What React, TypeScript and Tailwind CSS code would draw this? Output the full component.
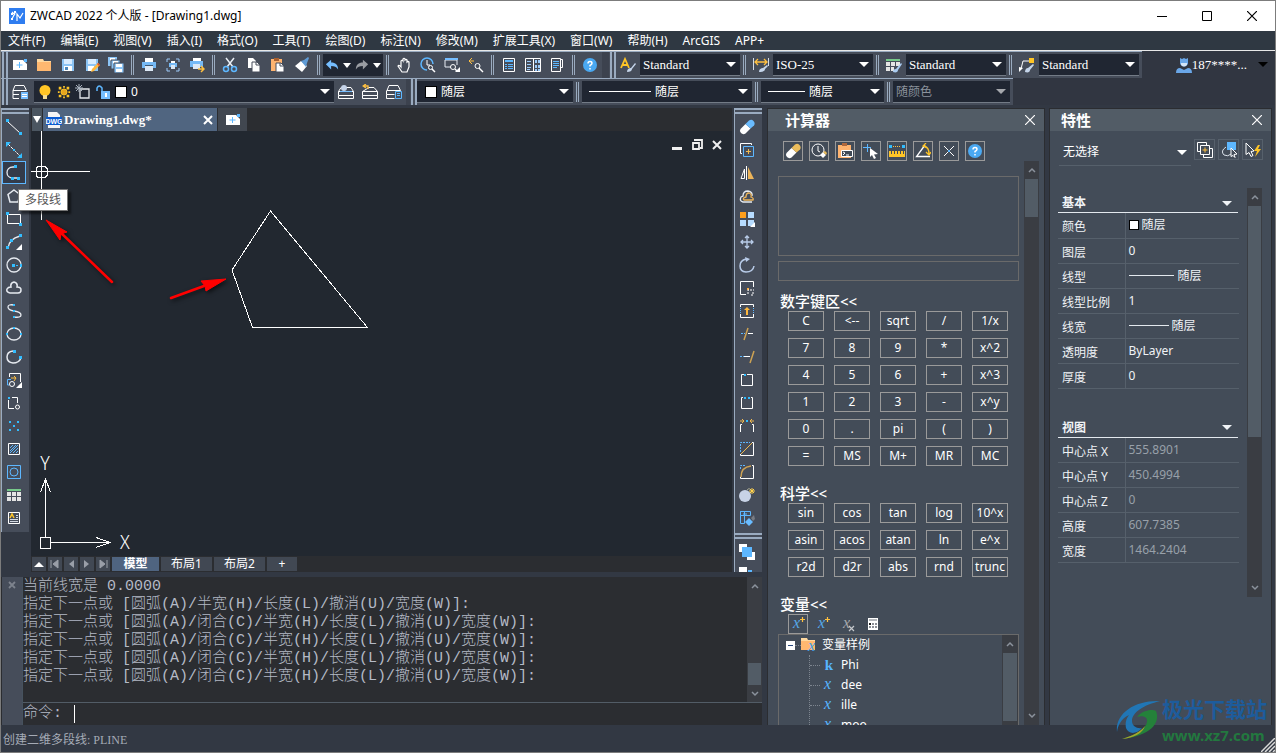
import React from "react";
import { useState } from "react";

type IconProps = { name: string; size?: string };

const menus = [
  "文件(F)",
  "编辑(E)",
  "视图(V)",
  "插入(I)",
  "格式(O)",
  "工具(T)",
  "绘图(D)",
  "标注(N)",
  "修改(M)",
  "扩展工具(X)",
  "窗口(W)",
  "帮助(H)",
  "ArcGIS",
  "APP+",
];

// every drawing below sits on a 16x16 grid
const icons: Record<string, React.ReactNode> = {
  new: (
    <>
      <path d="M1 3h10l4 4v6H1z" fill="#fff" />
      <path d="M12 2h3v3h-3z" fill="#5db7ff" />
      <path d="M7.500 5v6M4.500 8h6" stroke="#5db7ff" strokeWidth="1" />
    </>
  ),
  open: (
    <>
      <path d="M1 2h6l1 2h7v10H1z" fill="#ffd9a0" />
      <path d="M1 5h14v9H1z" fill="#ffb870" />
    </>
  ),
  save: (
    <>
      <path d="M2 2h12v12H2z" fill="#8cc4f5" />
      <path d="M4 2h8v5H4z" fill="#d8ecff" />
      <path d="M4 9h8v5H4z" fill="#fff" />
      <path d="M5 10h3v3H5z" fill="#4d88bb" />
    </>
  ),
  saveAs: (
    <>
      <path d="M2 2h12v12H2z" fill="#8cc4f5" />
      <path d="M4 2h8v5H4z" fill="#d8ecff" />
      <path d="M4 9h6v5H4z" fill="#fff" />
      <path d="M14 6l2 2-6 6-3 1 1-3z" fill="#ffb83d" />
      <path d="M14 6l2 2-1 1-2-2z" fill="#e04b2e" />
    </>
  ),
  saveAll: (
    <>
      <path d="M0 0h9v9H0z" fill="#8cc4f5" />
      <path d="M2 1h5v3H2z" fill="#fff" />
      <path d="M3 3h9v9H3z" fill="#8cc4f5" stroke="#464d5a" />
      <path d="M5 4h5v3H5z" fill="#fff" />
      <path d="M6 6h10v10H6z" fill="#8cc4f5" stroke="#464d5a" />
      <path d="M8 7h6v3H8zM8 12h6v3H8z" fill="#fff" />
    </>
  ),
  print: (
    <>
      <path d="M4 1h8v4H4z" fill="#fff" />
      <path d="M1 5h14v6H1z" fill="#75b9f5" />
      <path d="M4 8h8v6H4z" fill="#dce8f5" />
      <path d="M4 8h8v1H4z" fill="#3f5670" />
    </>
  ),
  preview: (
    <>
      <path d="M2 5V2h3M11 2h3v3M14 11v3h-3M5 14H2v-3" fill="none" stroke="#9ccbfa" />
      <path d="M6 4h4v2H6z" fill="#fff" />
      <path d="M4 6h8v4H4z" fill="#75b9f5" />
      <path d="M6 8h4v4H6z" fill="#dce8f5" />
    </>
  ),
  publish: (
    <>
      <path d="M4 1h8v4H4z" fill="#fff" />
      <path d="M1 4h13v6H1z" fill="#75b9f5" />
      <path d="M4 7h7v5H4z" fill="#dce8f5" />
      <path d="M9 12h5M12 9l3 3-3 3" fill="none" stroke="#ffc040" strokeWidth="1.500" />
    </>
  ),
  cut: (
    <>
      <path d="M4 1l7 9M12 1L5 10" stroke="#e8eef5" strokeWidth="1.500" />
      <circle cx="4" cy="12" r="2.500" fill="none" stroke="#5db7ff" strokeWidth="1.500" />
      <circle cx="12" cy="12" r="2.500" fill="none" stroke="#5db7ff" strokeWidth="1.500" />
    </>
  ),
  copy: (
    <>
      <path d="M2 1h5l3 3v7H2z" fill="#fff" />
      <path d="M6 5h5l3 3v7H6z" fill="#fff" stroke="#464d5a" />
      <path d="M10 5v3h4" fill="none" stroke="#464d5a" />
    </>
  ),
  paste: (
    <>
      <path d="M1 2h11v12H1z" fill="#ffb470" />
      <path d="M4 1h5v3H4z" fill="#a86030" />
      <path d="M6 6h5l3 3v6H6z" fill="#fff" stroke="#464d5a" />
      <path d="M10 6v3h4" fill="none" stroke="#464d5a" />
    </>
  ),
  brush: (
    <>
      <path d="M1 9l6-5 6 5-5 6z" fill="#fff" />
      <path d="M7 4l3-1 4-3 1 1-2 5-1 4z" fill="#5f9bd5" />
    </>
  ),
  undo: <path d="M7 2v3c5 0 8 3 8 8-2-3-4-4-8-4v4L1 7z" fill="#75bdff" />,
  redo: <path d="M9 2v3C4 5 1 8 1 13c2-3 4-4 8-4v4l6-6z" fill="#9a9da3" />,
  hand: (
    <path
      d="M5 9V4q1-1.500 2 0V2q1-1.500 2 0v1q1-1 2 0v2q1-1 2 0v5l-2 5H6L2 9q1-1.500 3 1z"
      fill="none"
      stroke="#fff"
      strokeWidth="1.200"
    />
  ),
  zoomTime: (
    <>
      <path d="M7 13A6 6 0 1 1 13 7" fill="none" stroke="#5db7ff" strokeWidth="1.500" />
      <path d="M7 3v5h3" fill="none" stroke="#fff" />
      <circle cx="10.500" cy="10.500" r="2" fill="none" stroke="#fff" />
      <path d="M12 12l3 3" stroke="#fff" strokeWidth="1.500" />
    </>
  ),
  zoomWindow: (
    <>
      <path d="M7 10H1V3h12v5" fill="none" stroke="#e8eef5" />
      <path d="M1 1h13v2H1z" fill="#75bdff" />
      <circle cx="9" cy="10" r="2.500" fill="none" stroke="#fff" />
      <path d="M11 12l2 2" stroke="#fff" strokeWidth="1.500" />
      <path d="M16 10v5h-5z" fill="#fff" />
    </>
  ),
  zoomBack: (
    <>
      <path d="M4 1L1 4l3 3M1 4h5" fill="none" stroke="#ffc040" />
      <circle cx="9.500" cy="9" r="2.500" fill="none" stroke="#fff" />
      <path d="M11 11l4 4" stroke="#fff" strokeWidth="1.500" />
    </>
  ),
  propsSheet: (
    <>
      <path d="M2.500 1.500h11v13h-11z" fill="none" stroke="#fff" />
      <path d="M4 3h8v2H4z" fill="#5db7ff" />
      <path d="M4 7h2v1H4zM7 7h5v1H7zM4 9h2v1H4zM7 9h5v1H7zM4 11h2v1H4zM7 11h5v1H7z" fill="#5db7ff" />
    </>
  ),
  designCenter: (
    <>
      <path d="M.5 1.500h15v13H.5zM8.500 1v14" fill="none" stroke="#fff" />
      <path d="M2 4.500h4M2 7.500h4M2 10.500h4M2 12.500h3" stroke="#9ccbfa" />
      <path d="M10 3h2v3h-2zM13 3h2v3h-2zM10 8h2v3h-2zM13 8h2v3h-2zM10 12h2v2h-2zM13 12h2v2h-2z" fill="#9ccbfa" />
    </>
  ),
  palettes: (
    <>
      <path d="M2.500 1.500h9v13h-9z" fill="none" stroke="#fff" />
      <path d="M4 4.500h6M4 6.500h6M4 8.500h6M4 10.500h4" stroke="#5db7ff" />
      <path d="M11.500 2.500h2v8h-2z" fill="none" stroke="#fff" />
    </>
  ),
  help: (
    <>
      <circle cx="8" cy="8" r="7" fill="#4aa9f2" />
      <path d="M6 6.500Q6 4.500 8 4.500t2 1.700Q10 7.500 8 8.500v1M8 11v1.500" fill="none" stroke="#fff" strokeWidth="1.500" />
    </>
  ),
  textStyle: (
    <>
      <path d="M1 11L5 2l4 9M3 8h5" fill="none" stroke="#ffc526" strokeWidth="1.800" />
      <path d="M7 15c0-3 2-4 4-4l4-5 1 1-4 5c0 2-2 3-5 3z" fill="#c5d5ea" />
    </>
  ),
  dimStyle: (
    <>
      <path d="M.5 1v12M15.500 1v8" stroke="#d5dce6" />
      <path d="M2 5h12M5 2L2 5l3 3M11 2l3 3-3 3" fill="none" stroke="#ffc040" strokeWidth="1.300" />
      <path d="M6 15c0-3 2-4 4-4l4-3 1 1-3 3c0 2-2 3-6 3z" fill="#c5d5ea" />
    </>
  ),
  tableStyle: (
    <>
      <path d="M0 2h14v2H0z" fill="#77c98a" />
      <path d="M0 5h4v4H0zM5 5h4v4H5zM10 5h4v4h-4zM0 10h4v4H0zM5 10h3v4H5z" fill="#e4e4e4" />
      <path d="M7 15c0-2 1-3 3-3l5-6 1 1-4 6c0 2-2 3-5 2z" fill="#a9cbf0" />
    </>
  ),
  leaderStyle: (
    <>
      <path d="M2 12l2-8h6" fill="none" stroke="#fff" />
      <path d="M0 10l4 1-4 4z" fill="#fff" />
      <path d="M10 1h5v5h-5z" fill="#ffc526" />
      <path d="M6 15c0-2 1-4 3-4l5-4 1 1-4 5c0 2-2 3-5 2z" fill="#c5d5ea" />
    </>
  ),
  user: (
    <>
      <path d="M4 1l2 1 2-1 2 1 2-1v6q-4 5-8 0zM0 16q0-5 4-5l4 2 4-2q4 0 4 5z" fill="#6aa7e8" />
      <path d="M5 6h6v2q-3 3-6 0z" fill="#d3e5f7" />
    </>
  ),
  layers: (
    <>
      <path d="M3 1.500h9l2.500 5H1zM1 6.500v4h6M1 10.500v4h6" fill="none" stroke="#fff" />
      <path d="M9 8h7v7H9z" fill="#75bdff" />
      <path d="M10 10.500h5M10 12.500h5" stroke="#fff" />
    </>
  ),
  layerDot: (
    <>
      <path d="M3 3.500h10l2.500 4H.5zM.5 7.500v4h15v-4M.5 11.500v3h15v-3" fill="none" stroke="#fff" />
      <circle cx="6" cy="4" r="3" fill="#c5d3e8" />
      <path d="M2 7.500h12" stroke="#75bdff" />
    </>
  ),
  layerPrev: (
    <>
      <path d="M7 3.500h5l3.500 4H.5zM.5 7.500v4h15v-4M.5 11.500v3h15v-3" fill="none" stroke="#fff" />
      <path d="M4 0L1 2l3 2M1 2h5v3" fill="none" stroke="#ffc040" strokeWidth="1.300" />
    </>
  ),
  layerState: (
    <>
      <path d="M3 1.500h9l2.500 5H1zM.5 6.500v4h8M.5 10.500v4h8" fill="none" stroke="#fff" />
      <path d="M9.500 7.500h6v7h-6zM11 9.500h3M11 11.500h3" fill="none" stroke="#5db7ff" />
    </>
  ),
  bulb: (
    <>
      <circle cx="8" cy="6.500" r="5.500" fill="#ffc526" />
      <path d="M6 11h4v4H6z" fill="#f3dc92" />
    </>
  ),
  sun: (
    <>
      <circle cx="8" cy="8" r="3.500" fill="#e6a51e" stroke="#ffc526" />
      <path d="M2 2h3v3H2zM7 1h2v2H7zM11 2h3v3h-3zM1 7h2v2H1zM13 7h2v2h-2zM2 11h3v3H2zM7 13h2v2H7zM11 11h3v3h-3z" fill="#ffc526" />
    </>
  ),
  freeze: (
    <>
      <path d="M5 5h9v9H5z" fill="none" stroke="#e4e7ec" strokeWidth="1.300" />
      <path d="M4 0v8M0 4h8M1 1l6 6M7 1L1 7" stroke="#aab3bf" />
    </>
  ),
  unlock: (
    <>
      <path d="M2 7V4q2-4 5 0v5" fill="none" stroke="#5db7ff" strokeWidth="1.500" />
      <path d="M6 7h9v8H6z" fill="#75bdff" />
      <path d="M10 9h2v4h-2z" fill="#fff" />
    </>
  ),
  line: (
    <>
      <path d="M2 3l12 11" stroke="#fff" />
      <path d="M0 0h3v3H0zM13 13h3v3h-3z" fill="#33bdff" />
    </>
  ),
  xline: (
    <>
      <path d="M2 2l12 12" stroke="#fff" strokeDasharray="3 1" />
      <path d="M0 0h5L0 5zM16 16h-5l5-5zM7 7h2v2H7z" fill="#33bdff" />
    </>
  ),
  pline: (
    <>
      <path d="M9 2H7C-1 2-1 13 7 13h5" fill="none" stroke="#e6eaf0" strokeWidth="1.300" />
      <path d="M8 0h3v3H8zM5 12h3v3H5zM11 12h3v3h-3z" fill="#33bdff" />
    </>
  ),
  polygon: <path d="M8 2l6 4.500-2 7.500H4L2 6.500z" fill="none" stroke="#e6eaf0" strokeWidth="1.500" />,
  rect: (
    <>
      <path d="M1.500 3.500h13v9h-13z" fill="none" stroke="#fff" />
      <path d="M0 1h3v3H0zM13 12h3v3h-3z" fill="#33bdff" />
    </>
  ),
  arc: (
    <>
      <path d="M2 14Q3 5 14 2" fill="none" stroke="#e6eaf0" strokeWidth="1.300" />
      <path d="M13 0h3v3h-3zM4 5h3v3H4zM0 12h3v3H0z" fill="#33bdff" />
      <path d="M16 10v6h-6z" fill="#fff" />
    </>
  ),
  circle: (
    <>
      <circle cx="8" cy="8" r="7" fill="none" stroke="#e6eaf0" strokeWidth="1.300" />
      <path d="M6 7h3v3H6zM10 8h2v1h-2zM14 7h2v3h-2z" fill="#33bdff" />
    </>
  ),
  cloud: (
    <path
      d="M4 13q-4-1-3-4 1-2 4-2-1-4 3-5 4 1 3 5 4 0 4 3t-3 3z"
      fill="none"
      stroke="#e6eaf0"
      strokeWidth="1.500"
    />
  ),
  spline: (
    <>
      <path d="M8 2Q2 1 2 4t6 4q7 1 7 4t-7 2" fill="none" stroke="#e6eaf0" strokeWidth="1.300" />
      <path d="M7 1h2v2H7zM7 7h2v2H7zM7 13h2v2H7z" fill="#33bdff" />
    </>
  ),
  ellipse: (
    <>
      <ellipse cx="8" cy="8" rx="7" ry="6" fill="none" stroke="#e6eaf0" strokeWidth="1.300" />
      <path d="M7 1h2v2H7zM0 7h2v2H0zM14 7h2v2h-2z" fill="#33bdff" />
    </>
  ),
  ellipseArc: (
    <>
      <path d="M7 2C-1 3-1 13 7 14q6 0 8-5" fill="none" stroke="#e6eaf0" strokeWidth="1.500" />
      <path d="M7 1h3v3H7zM13 7h3v3h-3z" fill="#33bdff" />
    </>
  ),
  insertBlock: (
    <>
      <path d="M3.500 5V1.500h11V10" fill="none" stroke="#fff" />
      <path d="M3 13H1.500V7.500H5" fill="none" stroke="#5db7ff" />
      <path d="M5 6h5M8 4l2 2-2 3" fill="none" stroke="#ffc040" />
      <circle cx="6" cy="12" r="2.500" fill="none" stroke="#fff" />
      <path d="M16 10v6h-6z" fill="#fff" />
    </>
  ),
  makeBlock: (
    <>
      <path d="M8 13.500H2.500V5M6 2.500h5.500V8" fill="none" stroke="#fff" />
      <path d="M2 2h2v2H2z" fill="#33bdff" />
      <circle cx="11.500" cy="12" r="2" fill="none" stroke="#fff" />
    </>
  ),
  points: (
    <path d="M3 3h2v2H3zM11 3h2v2h-2zM7 7h2v2H7zM3 11h2v2H3zM11 11h2v2h-2z" fill="#33bdff" />
  ),
  hatch: (
    <>
      <path d="M2.500 2.500h11v11h-11z" fill="none" stroke="#fff" />
      <path d="M4 7l3-3M4 10l6-6M4 12l8-8M7 12l5-5M10 12l2-2" stroke="#5db7ff" />
    </>
  ),
  region: (
    <>
      <path d="M1.500 1.500h13v13h-13z" fill="none" stroke="#5db7ff" />
      <circle cx="8" cy="8" r="4" fill="none" stroke="#5db7ff" />
    </>
  ),
  table: (
    <>
      <path d="M1 2h14v2H1z" fill="#77c98a" />
      <path d="M1 5h4v4H1zM6 5h4v4H6zM11 5h4v4h-4zM1 10h4v4H1zM6 10h4v4H6zM11 10h4v4h-4z" fill="#e4e4e4" />
    </>
  ),
  mtext: (
    <>
      <path d="M2.500 2.500h11v11h-11z" fill="none" stroke="#fff" />
      <path d="M10 5.500h2M10 7.500h2M4 9.500h8M4 11.500h8" fill="none" stroke="#d3d9e2" />
      <path d="M4 8l2-4 2 4" fill="none" stroke="#ffc526" strokeWidth="1.500" />
    </>
  ),
  erase: (
    <>
      <path d="M1.500 10L6.500 5l5 4.500-5 5q-2.500 1.500-4.500-.5t-.5-4z" fill="#fff" />
      <path d="M6.500 5l3.500-3.500q2.500-1.500 4.500.5t.5 4.500l-3.500 3z" fill="#6abcff" />
    </>
  ),
  eraseGold: (
    <>
      <path d="M1.500 10L6.500 5l5 4.500-5 5q-2.500 1.500-4.500-.5t-.5-4z" fill="#fff" />
      <path d="M6.500 5l3.500-3.500q2.500-1.500 4.500.5t.5 4.500l-3.500 3z" fill="#ecbd5c" />
    </>
  ),
  duplicate: (
    <>
      <path d="M3 11.500H1.500v-10H12.500V3" fill="none" stroke="#fff" />
      <path d="M4.500 4.500h10v10h-10z" fill="none" stroke="#5db7ff" />
      <path d="M7 9.500h5M9.500 7v5" stroke="#f0b950" />
    </>
  ),
  mirror: (
    <>
      <path d="M5.500 4v9.500H2z" fill="none" stroke="#fff" />
      <path d="M7.500 1v14" stroke="#fff" />
      <path d="M9 2v12h6z" fill="#ecb45a" />
    </>
  ),
  offset: (
    <>
      <path d="M13 14H4q-4-1-2-5l2-1q0-5 5-5 5 1 4 5" fill="none" stroke="#e6eaf0" strokeWidth="1.300" />
      <path d="M14 12H5q-2-2 2-3 0-4 3-4 3 1 2 4 3 1 2 3z" fill="none" stroke="#ecb45a" strokeWidth="1.300" />
    </>
  ),
  array: (
    <>
      <path d="M1 1h6v6H1z" fill="#ff9f1c" />
      <path d="M9 1h6v6H9zM1 9h6v6H1zM9 9h6v6H9z" fill="#b7dcff" />
      <path d="M16 11v5h-5z" fill="#fff" />
    </>
  ),
  move: (
    <path
      d="M8 2v12M2 8h12M6 4l2-2 2 2M6 12l2 2 2-2M4 6L2 8l2 2M12 6l2 2-2 2"
      fill="none"
      stroke="#b8cbe8"
      strokeWidth="1.300"
    />
  ),
  rotate: (
    <>
      <path d="M7 2C-1 4-1 14 7 15q7 0 8-6" fill="none" stroke="#b8cbe8" strokeWidth="1.500" />
      <path d="M6 0l5 2-4 3z" fill="#b8cbe8" />
    </>
  ),
  scale: (
    <>
      <path d="M7 14.500H1.500v-13h13V7" fill="none" stroke="#fff" />
      <path d="M8 8h2v2H8z" fill="#ffb040" />
      <path d="M9 14v-4h6M14 12v3h-3" fill="none" stroke="#fff" strokeDasharray="2 1" />
    </>
  ),
  stretch: (
    <>
      <path d="M1.500 4V1.500h13V4M1.500 11v3.500h13V11" fill="none" stroke="#fff" />
      <path d="M1.500 5v5M14.500 5v5" stroke="#5db7ff" strokeDasharray="1 1" />
      <path d="M8 4l3 3H9v5H7V7H5z" fill="#ffb83d" />
    </>
  ),
  trim: (
    <>
      <path d="M5 14L9 2" stroke="#cda254" strokeWidth="1.500" />
      <path d="M9 7.500h5" stroke="#fff" />
      <path d="M2 7.500h4" stroke="#5db7ff" strokeDasharray="2 1" />
    </>
  ),
  extend: (
    <>
      <path d="M11 14l4-12" stroke="#cda254" strokeWidth="1.500" />
      <path d="M5 7.500h6" stroke="#fff" />
      <path d="M1 7.500h4" stroke="#5db7ff" strokeDasharray="2 1" />
    </>
  ),
  breakPoint: (
    <>
      <path d="M5 2.500H2.500v11h11v-11H8" fill="none" stroke="#fff" />
      <path d="M5 2h2v2H5z" fill="#33bdff" />
    </>
  ),
  breakLine: (
    <>
      <path d="M4 2.500H2.500v11h11v-11H12" fill="none" stroke="#fff" />
      <path d="M5 2h2v2H5zM9 2h2v2H9z" fill="#33bdff" />
    </>
  ),
  join: (
    <>
      <path d="M1.500 14V6.500H3M14.500 14V6.500H13" fill="none" stroke="#fff" />
      <path d="M1 3h4M3 1l2 2-2 2M15 3h-4M13 1l-2 2 2 2" fill="none" stroke="#f0b950" />
      <path d="M7 2h2v2H7z" fill="#33bdff" />
    </>
  ),
  chamfer: (
    <>
      <path d="M13 1.500h1.500v13h-13V13" fill="none" stroke="#fff" />
      <path d="M1.500 11V1.500H11" fill="none" stroke="#5db7ff" strokeDasharray="2 1" />
      <path d="M2 13L13 2" stroke="#f0b950" />
    </>
  ),
  fillet: (
    <>
      <path d="M13 1.500h1.500v13h-13V13" fill="none" stroke="#fff" />
      <path d="M1.500 5V1.500H6" fill="none" stroke="#5db7ff" strokeDasharray="2 1" />
      <path d="M2 13Q2 3 12 2" fill="none" stroke="#cda254" strokeWidth="1.500" />
    </>
  ),
  explode: (
    <>
      <circle cx="6" cy="9" r="6" fill="#c8d3e6" />
      <path d="M8 3q2-3 4 0" fill="none" stroke="#a5a58f" />
      <path d="M13 1v6M10 4h6M11 2l4 4M15 2l-4 4" stroke="#ffd24d" />
    </>
  ),
  purge: (
    <>
      <path d="M1.500 1.500h10v4h-10zM1.500 1.500h4v12h-4zM4 4h4" fill="none" stroke="#5db7ff" />
      <path d="M10 8l4 4-4 4-4-4z" fill="#6abcff" />
      <path d="M12 8l3-3 1 4-2 2z" fill="#777c84" />
    </>
  ),
  orderFront: (
    <>
      <path d="M0 0h8v3H3v5H0zM16 16H8v-3h5V8h3z" fill="#fff" />
      <path d="M3 3h10v10H3z" fill="#5db7ff" />
    </>
  ),
  orderBack: (
    <>
      <path d="M0 0h8v8H0z" fill="#fff" />
      <path d="M9 3h4v10H3V9h6z" fill="#5db7ff" />
    </>
  ),
  history: (
    <>
      <circle cx="7" cy="7" r="6" fill="none" stroke="#fff" />
      <path d="M7 3v5l2 1" fill="none" stroke="#fff" />
      <path d="M9 12l3-3 3 3-3 3z" fill="#fff" />
      <path d="M12 9l2-1 2 2-1 2z" fill="#ecbd5c" />
    </>
  ),
  toCommand: (
    <>
      <path d="M1 2h13v13H1z" fill="#ffb470" />
      <path d="M5 0h5v3H5z" fill="#b0683c" />
      <path d="M4.500 7.500h11v6h-11z" fill="#414b57" stroke="#fff" />
      <path d="M6 9l2 1-2 2M9 12h3" fill="none" stroke="#fff" />
    </>
  ),
  getPoint: (
    <>
      <path d="M4.500 1v8M0 4.500h8" stroke="#5db7ff" />
      <path d="M7 5l8 6-4 .5L13 15l-2 1-2-4-2 2z" fill="#fff" />
    </>
  ),
  distance: (
    <>
      <path d="M0 2h3v3H0zM13 2h3v3h-3z" fill="#33bdff" />
      <path d="M4 3.500h8" stroke="#ffc040" strokeDasharray="1 1" />
      <path d="M0 8h16v6H0z" fill="#ffc526" />
      <path d="M2.500 8v3M5.500 8v3M8.500 8v3M11.500 8v3M14.500 8v3" stroke="#434c58" />
    </>
  ),
  angle: (
    <>
      <path d="M10 2L1.500 13.500H15" fill="none" stroke="#fff" strokeWidth="1.300" />
      <path d="M9 3q5 1 5 8M11 9l3 3 2-3M11 0L8 3l4 2" fill="none" stroke="#ffc526" strokeWidth="1.300" />
    </>
  ),
  intersect: (
    <>
      <path d="M3 3l10 10M13 3L3 13" stroke="#fff" />
      <path d="M7 7h2v2H7z" fill="#5db7ff" />
    </>
  ),
  pickAdd: (
    <>
      <path d="M3 9.500H.5v-9h9V3M13 6.500h2.500v9h-9V13" fill="none" stroke="#fff" />
      <path d="M3.500 3.500h9v9h-9z" fill="none" stroke="#fff" />
      <path d="M5.500 8h5M8 5.500v5" stroke="#ffc040" />
    </>
  ),
  selectObjects: (
    <>
      <path d="M6 0h9v8H6z" fill="#5db7ff" />
      <path d="M5 5Q-1 9 3 13q4 2 7-1" fill="none" stroke="#d9e0e8" />
      <path d="M10 6l6 6-3 .5 1 3-2-2-2 1z" fill="#434c58" stroke="#fff" />
    </>
  ),
  quickSelect: (
    <>
      <path d="M1 1l8 8-3 .5 2 4-2 1-2-4-3 2z" fill="none" stroke="#fff" />
      <path d="M13 3l-4 6h3l-2 6 6-8h-3l2-4z" fill="#ffc526" />
    </>
  ),
  calc: (
    <>
      <path d="M3 2h10v12H3z" fill="#fff" />
      <path d="M4 3h8v2H4z" fill="#b5b8bc" />
      <path d="M4 7h2v2H4z" fill="#222" />
      <path d="M7 7h2v2H7zM10 7h2v2h-2zM4 10h2v2H4zM7 10h2v2H7zM10 10h2v2h-2z" fill="#8b8f96" />
    </>
  ),
};

const drawTools = [
  ["line", "直线"],
  ["xline", "构造线"],
  ["pline", "多段线"],
  ["polygon", "正多边形"],
  ["rect", "矩形"],
  ["arc", "圆弧"],
  ["circle", "圆"],
  ["cloud", "修订云线"],
  ["spline", "样条曲线"],
  ["ellipse", "椭圆"],
  ["ellipseArc", "椭圆弧"],
  ["insertBlock", "插入块"],
  ["makeBlock", "创建块"],
  ["points", "点"],
  ["hatch", "填充"],
  ["region", "面域"],
  ["table", "表格"],
  ["mtext", "多行文字"],
];

const modifyTools = [
  ["erase", "删除"],
  ["duplicate", "复制"],
  ["mirror", "镜像"],
  ["offset", "偏移"],
  ["array", "阵列"],
  ["move", "移动"],
  ["rotate", "旋转"],
  ["scale", "缩放"],
  ["stretch", "拉伸"],
  ["trim", "修剪"],
  ["extend", "延伸"],
  ["breakPoint", "打断于点"],
  ["breakLine", "打断"],
  ["join", "合并"],
  ["chamfer", "倒角"],
  ["fillet", "圆角"],
  ["explode", "分解"],
  ["purge", "清理"],
];

const numberKeys = [
  "C", "<--", "sqrt", "/", "1/x",
  "7", "8", "9", "*", "x^2",
  "4", "5", "6", "+", "x^3",
  "1", "2", "3", "-", "x^y",
  "0", ".", "pi", "(", ")",
  "=", "MS", "M+", "MR", "MC",
];

const scienceKeys = [
  "sin", "cos", "tan", "log", "10^x",
  "asin", "acos", "atan", "ln", "e^x",
  "r2d", "d2r", "abs", "rnd", "trunc",
];

const consoleLines = [
  "当前线宽是 0.0000",
  "指定下一点或 [圆弧(A)/半宽(H)/长度(L)/撤消(U)/宽度(W)]:",
  "指定下一点或 [圆弧(A)/闭合(C)/半宽(H)/长度(L)/撤消(U)/宽度(W)]:",
  "指定下一点或 [圆弧(A)/闭合(C)/半宽(H)/长度(L)/撤消(U)/宽度(W)]:",
  "指定下一点或 [圆弧(A)/闭合(C)/半宽(H)/长度(L)/撤消(U)/宽度(W)]:",
  "指定下一点或 [圆弧(A)/闭合(C)/半宽(H)/长度(L)/撤消(U)/宽度(W)]:",
];

const Icon = ({ name, size = "size-4" }: IconProps) => (
  <svg viewBox="0 0 16 16" className={`${size} shrink-0`} aria-hidden="true">
    {icons[name]}
  </svg>
);

const Tool = ({ name, label }: { name: string; label: string }) => (
  <button aria-label={label} className="flex h-6 w-6 shrink-0 items-center justify-center">
    <Icon name={name} />
  </button>
);

const Down = ({ color = "#fff" }: { color?: string }) => (
  <svg viewBox="0 0 10 5" className="h-[5px] w-[10px] shrink-0" aria-hidden="true">
    <path d="M0 0h10L5 5z" fill={color} />
  </svg>
);

const Sep = () => (
  <div className="flex h-[22px] w-[9px] shrink-0 justify-center gap-px py-px">
    <span className="w-px bg-[#9aabc0]" />
    <span className="w-px bg-[#9aabc0]" />
  </div>
);

const Grip = () => (
  <div className="flex h-full w-[7px] shrink-0 gap-[2px] pl-px">
    <span className="w-[2px] bg-[#9aabc0]" />
    <span className="w-[2px] bg-[#9aabc0]" />
  </div>
);

const GripTop = () => (
  <div className="flex h-[7px] shrink-0 flex-col gap-[2px]">
    <span className="h-[2px] bg-[#9aabc0]" />
    <span className="h-[2px] bg-[#9aabc0]" />
  </div>
);

type ComboProps = {
  label: string;
  value: string;
  width: string;
  font?: string;
  dim?: boolean;
  children?: React.ReactNode;
};

const Combo = ({ label, value, width, font = "text-[12px]", dim, children }: ComboProps) => (
  <div className={`flex h-[22px] shrink-0 items-center gap-1 border-b border-[#737b86] bg-[#202632] pr-1 pl-[3px] ${width}`}>
    {children}
    <select
      aria-label={label}
      className={`h-full min-w-0 flex-1 appearance-none bg-transparent outline-none ${font} ${dim ? "text-[#8b929c]" : "text-white"}`}
    >
      <option>{value}</option>
    </select>
    <Down color={dim ? "#a5a8ad" : "#fff"} />
  </div>
);

const Chevron = ({ up }: { up?: boolean }) => (
  <svg viewBox="0 0 8 6" className="h-[6px] w-[8px]" aria-hidden="true">
    <path d={up ? "M1 5l3-3 3 3" : "M1 1l3 3 3-3"} fill="none" stroke="#8b929c" strokeWidth="1.500" />
  </svg>
);

const ScrollBar = ({ before, thumb }: { before: string; thumb: string }) => (
  <div className="flex w-[15px] shrink-0 flex-col items-stretch bg-[#3a3d43] px-px">
    <div className="flex h-[18px] shrink-0 items-center justify-center">
      <Chevron up />
    </div>
    <div className={before} />
    <div className={`bg-[#525c66] ${thumb}`} />
    <div className="mt-auto flex h-[18px] shrink-0 items-center justify-center">
      <Chevron />
    </div>
  </div>
);

const CloseMark = ({ color = "#fff", size = "size-[10px]" }: { color?: string; size?: string }) => (
  <svg viewBox="0 0 10 10" className={size} aria-hidden="true">
    <path d="M0 0l10 10M10 0L0 10" stroke={color} strokeWidth="1.200" />
  </svg>
);

const PanelHeader = ({ title, indent }: { title: string; indent: string }) => (
  <div className={`flex h-[22px] shrink-0 items-center justify-between bg-[#525c66] pr-[9px] ${indent}`}>
    <h2 className="text-[15px] leading-[22px] font-bold text-white">{title}</h2>
    <button aria-label={"关闭" + title} className="flex">
      <CloseMark />
    </button>
  </div>
);

const Keys = ({ keys }: { keys: string[] }) => (
  <div className="grid grid-cols-[repeat(5,36px)] gap-x-[10px] gap-y-[7px] pl-[10px]">
    {keys.map((key) => (
      <button key={key} className="h-5 border border-[#9a9a9a] text-center text-[12px] leading-[18px] text-white">
        {key}
      </button>
    ))}
  </div>
);

const KeysTitle = ({ text }: { text: string }) => (
  <h3 className="h-5 shrink-0 pl-[2px] text-[15px] leading-5 font-medium text-white">{text}</h3>
);

const MainToolbar = () => (
  <div className="flex h-[27px] shrink-0 bg-[#313641]">
    <div className="flex items-center overflow-hidden border-t border-[#9aabc0] bg-[#464d5a] pr-[3px]">
      <Grip />
      <Tool name="new" label="新建" />
      <Tool name="open" label="打开" />
      <Tool name="save" label="保存" />
      <Tool name="saveAs" label="另存为" />
      <Tool name="saveAll" label="全部保存" />
      <Sep />
      <Tool name="print" label="打印" />
      <Tool name="preview" label="打印预览" />
      <Tool name="publish" label="发布" />
      <Sep />
      <Tool name="cut" label="剪切" />
      <Tool name="copy" label="复制" />
      <Tool name="paste" label="粘贴" />
      <Tool name="brush" label="特性匹配" />
      <Sep />
      <div className="flex h-[22px] w-[60px] shrink-0 items-center justify-between bg-[#202632] px-[2px]">
        <button aria-label="放弃">
          <Icon name="undo" size="size-[14px]" />
        </button>
        <button aria-label="放弃列表">
          <svg viewBox="0 0 8 5" className="h-[5px] w-[8px]"><path d="M0 0h8L4 5z" fill="#fff" /></svg>
        </button>
        <button aria-label="重做">
          <Icon name="redo" size="size-[14px]" />
        </button>
        <button aria-label="重做列表">
          <svg viewBox="0 0 8 5" className="h-[5px] w-[8px]"><path d="M0 0h8L4 5z" fill="#fff" /></svg>
        </button>
      </div>
      <Sep />
      <Tool name="hand" label="平移" />
      <Tool name="zoomTime" label="实时缩放" />
      <Tool name="zoomWindow" label="窗口缩放" />
      <Tool name="zoomBack" label="缩放上一个" />
      <Sep />
      <Tool name="propsSheet" label="特性" />
      <Tool name="designCenter" label="设计中心" />
      <Tool name="palettes" label="工具选项板" />
      <Sep />
      <Tool name="help" label="帮助" />
      <div className="h-full w-[7px] shrink-0 bg-[#3c424e]" />
      <Grip />
      <Tool name="textStyle" label="文字样式" />
      <Combo label="文字样式列表" value="Standard" width="w-[100px]" font="font-['Liberation_Serif',serif] text-[13px]" />
      <Sep />
      <Tool name="dimStyle" label="标注样式" />
      <Combo label="标注样式列表" value="ISO-25" width="w-[100px]" font="font-['Liberation_Serif',serif] text-[13px]" />
      <Sep />
      <Tool name="tableStyle" label="表格样式" />
      <Combo label="表格样式列表" value="Standard" width="w-[100px]" font="font-['Liberation_Serif',serif] text-[13px]" />
      <Sep />
      <Tool name="leaderStyle" label="多重引线样式" />
      <Combo label="多重引线样式列表" value="Standard" width="w-[100px]" font="font-['Liberation_Serif',serif] text-[13px]" />
    </div>
    <button className="ml-auto flex items-center pr-[7px] text-white">
      <Icon name="user" />
      <span className="font-['Liberation_Serif',serif] text-[13px]">187****...</span>
      <span className="pl-[11px]">
        <Down color="#000" />
      </span>
    </button>
  </div>
);

const LayerToolbar = () => (
  <div className="flex h-[27px] shrink-0 bg-[#313641]">
    <div className="flex items-center overflow-hidden border-t border-[#9aabc0] bg-[#464d5a] pr-[3px]">
      <Grip />
      <Tool name="layers" label="图层特性" />
      <div className="pl-[2px]">
        <Combo label="图层" value="0" width="w-[300px]">
          <Icon name="bulb" />
          <Icon name="sun" size="size-[14px]" />
          <Icon name="freeze" />
          <Icon name="unlock" />
          <span className="size-3 shrink-0 border border-black bg-white" />
        </Combo>
      </div>
      <Tool name="layerDot" label="将对象的图层置为当前" />
      <Tool name="layerPrev" label="上一个图层" />
      <Tool name="layerState" label="图层状态" />
      <div className="h-full w-[4px] shrink-0 bg-[#3c424e]" />
      <Grip />
      <Combo label="颜色" value="随层" width="w-[156px]">
        <span className="ml-[5px] size-3 shrink-0 border border-black bg-white" />
      </Combo>
      <Sep />
      <Combo label="线型" value="随层" width="w-[170px]">
        <span className="ml-1 h-px w-[62px] shrink-0 bg-white" />
      </Combo>
      <Sep />
      <Combo label="线宽" value="随层" width="w-[123px]">
        <span className="ml-1 h-px w-[37px] shrink-0 bg-white" />
      </Combo>
      <Sep />
      <Combo label="打印样式" value="随颜色" width="w-[117px]" dim />
    </div>
  </div>
);

const Canvas = () => (
  <div className="relative flex-1 bg-[#222830]">
    <svg className="absolute top-0 left-0 h-[240px] w-[360px]" viewBox="0 0 360 240">
      <g fill="none" stroke="#fff" shapeRendering="crispEdges">
        <path d="M239.500 80L201 139l20.500 57.500H336.500z" />
        <path d="M10.500 0v89M0 40.500h59" />
        <path d="M7 35.500h7l2 2v7l-2 2H7l-2-2v-7z" />
      </g>
      <g className="drop-shadow-[2px_2px_2px_rgba(0,0,0,0.6)]">
        <path d="M28 100L81 151" stroke="#f00" strokeWidth="2.500" strokeLinecap="round" />
        <path d="M15 89l21 12-6 2-1 6z" fill="#f00" stroke="#f00" />
        <path d="M173 155l-33 12" stroke="#f00" strokeWidth="2.500" strokeLinecap="round" />
        <path d="M195 148l-20 12-1-5-4-5z" fill="#f00" stroke="#f00" />
      </g>
    </svg>

    <svg className="absolute bottom-0 left-0 h-[110px] w-[110px]" viewBox="0 0 110 110">
      <g fill="none" stroke="#fff" shapeRendering="crispEdges">
        <path d="M9.500 91.500h10v11h-10zM14.500 91V33M20 96.500h59" />
        <path d="M9.500 46l5-13 5 13M65 91.500l14 5-14 5" />
      </g>
      <text x="14" y="24" textAnchor="middle" fill="#fff" fontSize="19" fontWeight="300" fontFamily="Noto Sans CJK SC, sans-serif">
        Y
      </text>
      <text x="94" y="103" textAnchor="middle" fill="#fff" fontSize="19" fontWeight="300" fontFamily="Noto Sans CJK SC, sans-serif">
        X
      </text>
    </svg>

    <div className="absolute top-[8px] right-[9px] flex items-center gap-[8px]">
      <button aria-label="最小化图形">
        <svg viewBox="0 0 12 12" className="size-3"><path d="M1 8h10v3H1z" fill="#f0f0f0" /></svg>
      </button>
      <button aria-label="还原图形">
        <svg viewBox="0 0 12 12" className="size-3">
          <path d="M3 1h8v8h-2M2 4h6v6H2z" fill="none" stroke="#f0f0f0" strokeWidth="1.800" />
        </svg>
      </button>
      <button aria-label="关闭图形">
        <svg viewBox="0 0 12 12" className="size-3"><path d="M2 2l8 8M10 2l-8 8" stroke="#f0f0f0" strokeWidth="2" /></svg>
      </button>
    </div>

    <div
      role="tooltip"
      className="absolute top-[58px] left-[-13px] z-10 h-[22px] border border-[#767676] bg-white px-[6px] text-[12px] leading-5 whitespace-nowrap text-[#575757] shadow-[3px_3px_2px_rgba(0,0,0,0.5)]"
    >
      多段线
    </div>
  </div>
);

const navPaths = ["M1 9h10L6 4z", "M2 2v8M9 2v8L4 6z", "M9 2v8L4 6z", "M3 2v8l5-4z", "M3 2v8l5-4zM10 2v8"];

const LayoutTabs = () => (
  <div className="flex h-[16px] gap-[2px] bg-[#2b2d31] py-px pl-px">
    {navPaths.map((d, i) => (
      <button key={d} aria-label={"布局导航" + (i + 1)} className="flex w-[14px] items-center justify-center bg-[#414853]">
        <svg viewBox="0 0 12 12" className="size-3">
          <path d={d} fill={i === 0 ? "#fff" : "#9a9fa8"} stroke={i === 1 || i === 4 ? "#9a9fa8" : "none"} />
        </svg>
      </button>
    ))}
    <button className="w-[47px] bg-[#4f6480] text-[12px] leading-[14px] font-bold text-white">模型</button>
    <button className="w-[51px] bg-[#414853] text-[12px] leading-[14px] text-white">布局1</button>
    <button className="w-[51px] bg-[#414853] text-[12px] leading-[14px] text-white">布局2</button>
    <button className="w-[30px] bg-[#414853] text-[12px] leading-[14px] text-white">+</button>
  </div>
);

const DrawingWindow = () => (
  <div className="flex min-w-0 flex-1 flex-col">
    <div className="flex h-[23px] shrink-0 gap-px bg-[#2b2d31] pl-px">
      <button aria-label="文件列表" className="flex w-[10px] items-center justify-center bg-[#4b5661]">
        <svg viewBox="0 0 8 7" className="h-[7px] w-[8px]"><path d="M0 0h8L4 7z" fill="#fff" /></svg>
      </button>
      <div className="flex w-[174px] items-center gap-[2px] bg-[#506580] pr-[4px] pl-[3px]">
        <svg viewBox="0 0 16 16" className="size-4">
          <path d="M2 0h9l3 3v13H2z" fill="#f4f4f4" />
          <path d="M0 5h16v8H0z" fill="#0a5bd0" />
          <text x="8" y="12" textAnchor="middle" fontSize="7" fontWeight="700" fill="#fff" fontFamily="Liberation Sans, sans-serif">
            DWG
          </text>
        </svg>
        <span className="flex-1 font-['Liberation_Serif',serif] text-[13px] font-bold text-white">Drawing1.dwg*</span>
        <button aria-label="关闭文件">
          <svg viewBox="0 0 10 10" className="size-[10px]"><path d="M1 1l8 8M9 1L1 9" stroke="#fff" strokeWidth="2" /></svg>
        </button>
      </div>
      <button aria-label="新建文件" className="flex w-[29px] items-center justify-center bg-[#414750]">
        <Icon name="new" />
      </button>
    </div>
    <Canvas />
    <LayoutTabs />
  </div>
);

const CommandLine = () => {
  const [command, setCommand] = useState("");

  return (
    <div className="flex h-[148px] shrink-0 bg-[#2b2d31] pl-px">
      <div className="flex w-[20px] justify-center bg-[#464d5a] pt-[4px]">
        <button aria-label="关闭命令行" className="flex h-2">
          <svg viewBox="0 0 8 8" className="size-2"><path d="M1 1l6 6M7 1L1 7" stroke="#7d838d" strokeWidth="1.800" /></svg>
        </button>
      </div>
      <div className="flex flex-1 flex-col border-l border-[#46525e] font-['Liberation_Mono','Noto_Sans_CJK_SC',monospace] text-[15px] text-[#b4bac6]">
        <div className="flex h-[125px]">
          <div className="flex-1 overflow-hidden pt-px">
            {consoleLines.map((text, i) => (
              <div key={i} className="h-[18px] leading-[18px] font-light whitespace-nowrap">
                {text}
              </div>
            ))}
          </div>
          <ScrollBar before="h-[68px] shrink-0" thumb="h-[22px] shrink-0" />
        </div>
        <div className="flex flex-1 items-center border-t border-[#525c66]">
          <label htmlFor="command" className="font-light">
            命令:
          </label>
          <div className="ml-[12px] flex h-[18px] flex-1 border-l border-white">
            <input
              id="command"
              value={command}
              onChange={(e) => setCommand(e.target.value)}
              className="w-full bg-transparent outline-none"
            />
          </div>
        </div>
      </div>
    </div>
  );
};

const calcTools = [
  ["eraseGold", "清除"],
  ["history", "清除历史"],
  ["toCommand", "粘贴到命令行"],
  ["getPoint", "获取坐标"],
  ["distance", "两点之间的距离"],
  ["angle", "由两点定义的直线角度"],
  ["intersect", "四点定义的交点"],
  ["help", "帮助"],
];

const VarMark = ({ extra, color = "#56a9e8" }: { extra?: string; color?: string }) => (
  <svg viewBox="0 0 16 16" className="size-4 shrink-0 overflow-visible">
    <text x="3" y="12" fontSize="16" fontStyle="italic" fill={color} fontFamily="Liberation Serif, serif">
      x
    </text>
    {extra === "plus" && <path d="M12.500 1v5M10 3.500h5" stroke="#ffc040" strokeWidth="1.200" />}
    {extra === "cross" && <path d="M9 10l5 5M14 10l-5 5" stroke="#c5c8cc" strokeWidth="1.200" />}
  </svg>
);

const Calculator = () => {
  const [expression, setExpression] = useState("");

  return (
    <section className="flex w-[278px] shrink-0 flex-col border-x border-t border-[#2b2d31] bg-[#434c58]">
      <PanelHeader title="计算器" indent="pl-[17px]" />
      <div className="flex min-h-0 flex-1 pl-[10px]">
        <div className="flex w-[241px] shrink-0 flex-col overflow-hidden pt-[10px]">
          <div className="flex shrink-0 gap-[6px] pl-[5px]">
            {calcTools.map(([name, label]) => (
              <button key={name} aria-label={label} className="flex size-5 items-center justify-center border border-[#9a9a9a]">
                <Icon name={name} />
              </button>
            ))}
          </div>
          <output className="mt-[15px] block h-20 shrink-0 border border-[#6a6a6a]" />
          <input
            aria-label="表达式"
            value={expression}
            onChange={(e) => setExpression(e.target.value)}
            className="mt-[5px] mb-[10px] h-5 shrink-0 border border-[#6a6a6a] bg-transparent px-1 text-[12px] text-white outline-none"
          />
          <KeysTitle text="数字键区<<" />
          <Keys keys={numberKeys} />
          <div className="h-[17px] shrink-0" />
          <KeysTitle text="科学<<" />
          <Keys keys={scienceKeys} />
          <div className="h-[17px] shrink-0" />
          <KeysTitle text="变量<<" />
          <div className="flex h-5 shrink-0 items-center gap-[5px] pl-[10px]">
            <button aria-label="新建变量" className="flex size-5 items-center justify-center border border-[#9a9a9a]">
              <VarMark extra="plus" />
            </button>
            <button aria-label="编辑变量" className="flex size-5 items-center justify-center">
              <VarMark extra="plus" />
            </button>
            <button aria-label="删除变量" className="flex size-5 items-center justify-center">
              <VarMark extra="cross" color="#a5a8ad" />
            </button>
            <button aria-label="返回变量到输入区" className="flex size-5 items-center justify-center">
              <Icon name="calc" />
            </button>
          </div>
          <div className="flex min-h-0 flex-1 border-x border-t border-[#6a6a6a]">
            <div className="flex-1 overflow-hidden text-[12px] leading-5 text-white">
              <div className="flex h-5 items-center pl-[7px]">
                <svg viewBox="0 0 9 9" className="size-[9px]">
                  <path d="M0 0h9v9H0z" fill="#fff" />
                  <path d="M2 4.500h5" stroke="#2b4a80" />
                </svg>
                <span className="w-[6px] border-t border-dotted border-[#7d858f]" />
                <svg viewBox="0 0 16 16" className="size-4 overflow-visible">
                  <path d="M0 1h6l1 2h7v10H0z" fill="#ffd9a0" />
                  <path d="M0 4h14v9H0z" fill="#ffb870" />
                  <text x="7" y="14" fontSize="16" fontStyle="italic" fill="#3f9fe8" fontFamily="Liberation Serif, serif">x</text>
                </svg>
                <span className="pl-[5px]">变量样例</span>
              </div>
              <ul className="ml-[30px] border-l border-dotted border-[#7d858f]">
                {["Phi", "dee", "ille", "moo"].map((name) => (
                  <li key={name} className="flex h-5 items-center">
                    <span className="mr-px w-[10px] border-t border-dotted border-[#7d858f]" />
                    {name === "Phi" ? (
                      <b className="w-4 text-center font-['Liberation_Serif',serif] text-[15px] text-[#56b4ff]">k</b>
                    ) : (
                      <VarMark color="#56b4ff" />
                    )}
                    <span className="pl-1">{name}</span>
                  </li>
                ))}
              </ul>
            </div>
            <div className="flex w-[16px] shrink-0 flex-col bg-[#3a3d43] px-px pb-[4px]">
              <div className="flex h-[18px] shrink-0 items-center justify-center">
                <Chevron up />
              </div>
              <div className="flex-1 bg-[#525c66]" />
            </div>
          </div>
        </div>
        <div className="ml-[5px] flex pt-[30px]">
          <ScrollBar before="" thumb="h-[38px] shrink-0" />
        </div>
      </div>
    </section>
  );
};

type Row = [string, React.ReactNode];

const basicRows: Row[] = [
  [
    "颜色",
    <span className="flex items-center gap-[3px]">
      <span className="size-[10px] border border-black bg-white" />
      随层
    </span>,
  ],
  ["图层", "0"],
  [
    "线型",
    <span className="flex items-center gap-1">
      <span className="h-px w-[45px] bg-[#e4e9ee]" />
      随层
    </span>,
  ],
  ["线型比例", "1"],
  [
    "线宽",
    <span className="flex items-center gap-[3px]">
      <span className="h-px w-[40px] bg-[#e4e9ee]" />
      随层
    </span>,
  ],
  ["透明度", "ByLayer"],
  ["厚度", "0"],
];

const viewRows: Row[] = [
  ["中心点 X", "555.8901"],
  ["中心点 Y", "450.4994"],
  ["中心点 Z", "0"],
  ["高度", "607.7385"],
  ["宽度", "1464.2404"],
];

const PropertyGroup = ({ title, rows, dim }: { title: string; rows: Row[]; dim?: boolean }) => (
  <div>
    <button className="flex h-[22px] w-[180px] items-center justify-between border-b border-[#e4e9ee] pt-[3px] pr-[6px] pl-1 text-[12px] font-bold text-[#f0f3f6]">
      {title}
      <Down color="#f0f3f6" />
    </button>
    <table className="w-full table-fixed border-collapse text-[12px]">
      <tbody>
        {rows.map(([name, value]) => (
          <tr key={name} className="h-[25px] border-b border-[#56606b]">
            <th scope="row" className="w-[67px] border-r border-[#56606b] p-0 pt-[4px] pl-1 text-left leading-[18px] font-normal text-[#f0f3f6]">
              {name}
            </th>
            <td className={`p-0 pl-[3px] leading-[18px] ${dim ? "text-[#98a0a9]" : "text-[#f0f3f6]"}`}>{value}</td>
          </tr>
        ))}
      </tbody>
    </table>
  </div>
);

const Properties = () => (
  <section className="flex w-[223px] shrink-0 flex-col border-x border-t border-[#2b2d31] bg-[#434c58]">
    <PanelHeader title="特性" indent="pl-[11px]" />
    <div className="flex pt-[8px] pl-[9px]">
      <div className="mr-[3px] flex h-[27px] w-[132px] items-center border-b border-[#56606b] pr-[4px] pl-1">
        <select aria-label="选择对象" className="min-w-0 flex-1 appearance-none bg-transparent text-[12px] text-white outline-none">
          <option>无选择</option>
        </select>
        <Down />
      </div>
      <div className="flex gap-[3px]">
        {[["pickAdd", "切换选择"], ["selectObjects", "选择对象"], ["quickSelect", "快速选择"]].map(([name, label]) => (
          <button key={name} aria-label={label} className="flex size-[21px] items-center justify-center border border-[#56606b]">
            <Icon name={name} />
          </button>
        ))}
      </div>
    </div>
    <div className="mt-[22px] flex h-[409px] justify-between overflow-hidden pr-[9px] pl-[8px]">
      <div className="flex w-[181px] flex-col gap-[27px] pt-[3px]">
        <PropertyGroup title="基本" rows={basicRows} />
        <PropertyGroup title="视图" rows={viewRows} dim />
      </div>
      <ScrollBar before="" thumb="h-[231px] shrink-0" />
    </div>
  </section>
);

const SideBar = ({ tools, active }: { tools: string[][]; active?: string }) => (
  <>
    <GripTop />
    {tools.map(([name, label]) => (
      <button
        key={name}
        aria-label={label}
        className={`flex h-[23px] w-[24px] shrink-0 items-center justify-center ${name === active ? "border border-[#5db7ff] bg-[#333b4a]" : ""}`}
      >
        <Icon name={name} />
      </button>
    ))}
  </>
);

const Watermark = () => (
  <div className="pointer-events-none absolute right-[8px] bottom-[3px] flex items-center">
    <svg viewBox="0 0 46 42" className="h-[42px] w-[46px]">
      <path d="M1 32C-1 14 18 0 44 1 28 5 16 12 16 21c0 5 5 8 10 7-6 7-14 6-16 0-1-5 0-9 3-13C5 19 2 25 1 32z" fill="#2176b5" />
      <path d="M40 11c5 12-6 25-34 28 13-4 24-10 25-17 1-5-4-7-10-5 6-7 15-8 19-6z" fill="#24813a" />
      <path d="M6 39c10-3 18-7 23-13-2 7-11 12-23 13z" fill="#a5a52c" />
    </svg>
    <div>
      <div className="text-[21px] leading-[32px] font-bold whitespace-nowrap text-[#1d5c9c]">极光下载站</div>
      <div className="pb-1 text-[15px] leading-[20px] font-bold text-[#23783f]">www.xz7.com</div>
    </div>
  </div>
);

const App = () => {
  return (
    <div className="relative flex h-screen flex-col overflow-hidden border-x border-b border-[#7c7c7c] bg-[#323843] font-['Noto_Sans','Noto_Sans_CJK_SC',sans-serif]">
      <header className="flex h-[31px] shrink-0 items-center border-t border-[#7c7c7c] bg-white pl-[8px]">
        <svg viewBox="0 0 16 16" className="size-4">
          <path d="M0 0h16v16H0z" fill="#2f7df0" />
          <path d="M3 11l3-6M3 4l3 3M8 13V6l3 4 3-5" fill="none" stroke="#fff" strokeWidth="1.200" />
          <path d="M2 10h2v2H2zM5 3h2v2H5zM2 5h2v2H2z" fill="#fff" />
        </svg>
        <h1 className="pl-[5px] text-[12px] text-black">ZWCAD 2022 个人版 - [Drawing1.dwg]</h1>
        <div className="ml-auto flex items-center gap-[35px] pr-[18px]">
          <button aria-label="最小化">
            <svg viewBox="0 0 10 10" className="size-[10px]"><path d="M0 5.500h10" stroke="#000" /></svg>
          </button>
          <button aria-label="最大化">
            <svg viewBox="0 0 10 10" className="size-[10px]"><path d="M.5.5h9v9h-9z" fill="none" stroke="#000" /></svg>
          </button>
          <button aria-label="关闭">
            <CloseMark color="#000" />
          </button>
        </div>
      </header>

      <nav className="flex h-[20px] shrink-0 gap-[15px] border-b border-[#e8e8e8] bg-[#2f3842] pl-[7px] text-[12px] leading-[19px] text-white">
        {menus.map((menu) => (
          <button key={menu} className="whitespace-nowrap">
            {menu}
          </button>
        ))}
      </nav>

      <MainToolbar />
      <LayerToolbar />

      <main className="flex min-h-0 flex-1 gap-1 pr-[3px]">
        <div className="flex min-w-0 flex-1 flex-col pr-px">
          <div className="flex min-h-0 flex-1 pt-[3px] pb-[5px]">
            <div className="mr-[2px] w-[28px] shrink-0 self-start border-l border-[#9aabc0] bg-[#464d5a] pb-[3px]">
              <SideBar tools={drawTools} active="pline" />
            </div>
            <DrawingWindow />
            <div className="ml-[2px] flex w-[28px] shrink-0 flex-col overflow-hidden border-l border-[#9aabc0] bg-[#464d5a]">
              <SideBar tools={modifyTools} />
              <div className="h-[4px] shrink-0" />
              <SideBar tools={[["orderFront", "前置"], ["orderBack", "后置"]]} />
            </div>
          </div>
          <CommandLine />
        </div>
        <div className="flex pt-[3px]">
          <Calculator />
        </div>
        <div className="flex pt-[3px]">
          <Properties />
        </div>
      </main>

      <footer className="flex h-[27px] shrink-0 items-center justify-between pl-[2px]">
        <p className="pt-[3px] font-['Liberation_Serif','Noto_Sans_CJK_SC',serif] text-[12px] text-[#a5abb6]">创建二维多段线: PLINE</p>
        <svg viewBox="0 0 14 14" className="size-[14px] self-end">
          <path d="M0 14L14 0M4 14L14 4M8 14l6-6M12 14l2-2" stroke="#d9d9d9" strokeWidth="1.500" />
        </svg>
      </footer>

      <Watermark />
    </div>
  );
};

export default App;
